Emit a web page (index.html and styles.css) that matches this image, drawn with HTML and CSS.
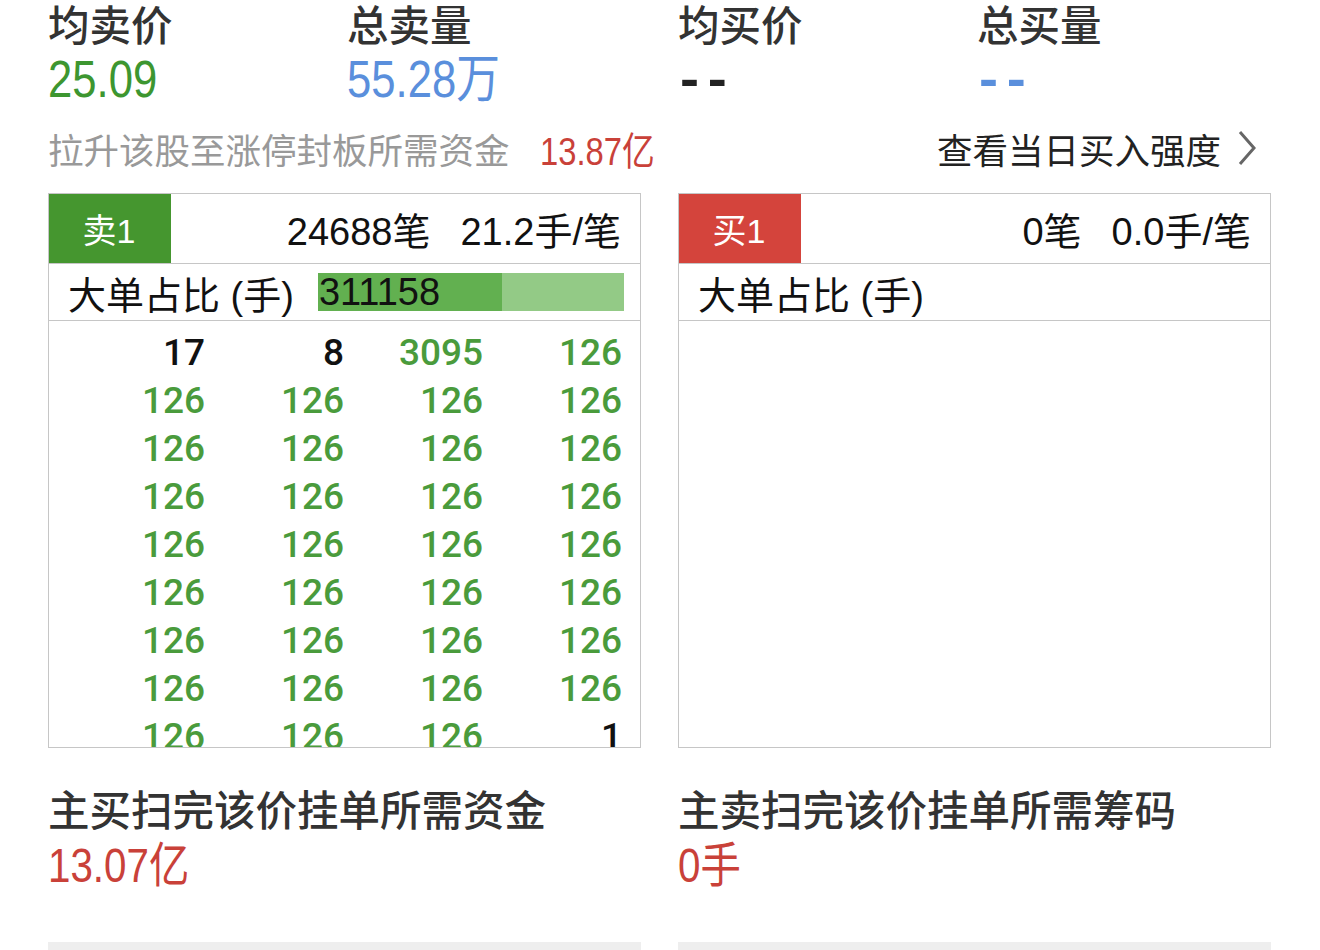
FILE: index.html
```html
<!DOCTYPE html>
<html lang="zh-CN">
<head>
<meta charset="utf-8">
<title>封单详情</title>
<link rel="stylesheet" href="styles.css">
</head>
<body>
<div class="page">
  <div class="side">
    <div class="stats">
      <div class="stat">
        <div class="stat-label">均卖价</div>
        <div class="stat-value green"><span class="cond">25.09</span></div>
      </div>
      <div class="stat">
        <div class="stat-label">总卖量</div>
        <div class="stat-value blue"><span class="cond">55.28万</span></div>
      </div>
    </div>
    <div class="note">
      <span class="note-label">拉升该股至涨停封板所需资金</span>
      <span class="note-value red"><span class="cond">13.87亿</span></span>
    </div>
    <div class="panel">
      <div class="panel-head">
        <div class="tag tag-sell">卖1</div>
        <div class="head-info"><span>24688笔</span><span>21.2手/笔</span></div>
      </div>
      <div class="panel-ratio">
        <span class="ratio-label">大单占比 (手)</span>
        <div class="ratio-bar">
          <div class="ratio-fill" style="width:60%"></div>
          <span class="ratio-text">311158</span>
        </div>
      </div>
      <div class="orders">
        <span class="dark">17</span><span class="dark">8</span><span>3095</span><span>126</span>
        <span>126</span><span>126</span><span>126</span><span>126</span>
        <span>126</span><span>126</span><span>126</span><span>126</span>
        <span>126</span><span>126</span><span>126</span><span>126</span>
        <span>126</span><span>126</span><span>126</span><span>126</span>
        <span>126</span><span>126</span><span>126</span><span>126</span>
        <span>126</span><span>126</span><span>126</span><span>126</span>
        <span>126</span><span>126</span><span>126</span><span>126</span>
        <span>126</span><span>126</span><span>126</span><span class="dark">1</span>
      </div>
    </div>
    <div class="sweep">
      <div class="sweep-label">主买扫完该价挂单所需资金</div>
      <div class="sweep-value red"><span class="cond">13.07亿</span></div>
    </div>
    <div class="grey-block"></div>
  </div>

  <div class="side">
    <div class="stats">
      <div class="stat">
        <div class="stat-label">均买价</div>
        <div class="stat-value dash"><span class="wide">--</span></div>
      </div>
      <div class="stat">
        <div class="stat-label">总买量</div>
        <div class="stat-value dash blue"><span class="wide">--</span></div>
      </div>
    </div>
    <div class="note note-right">
      <span class="note-link">查看当日买入强度</span>
      <svg class="chevron" width="20" height="36" viewBox="0 0 20 36"><path d="M3 2 L17 18 L3 34" fill="none" stroke="#666" stroke-width="3"/></svg>
    </div>
    <div class="panel">
      <div class="panel-head">
        <div class="tag tag-buy">买1</div>
        <div class="head-info"><span>0笔</span><span>0.0手/笔</span></div>
      </div>
      <div class="panel-ratio">
        <span class="ratio-label">大单占比 (手)</span>
      </div>
      <div class="orders"></div>
    </div>
    <div class="sweep">
      <div class="sweep-label">主卖扫完该价挂单所需筹码</div>
      <div class="sweep-value red"><span class="cond">0手</span></div>
    </div>
    <div class="grey-block"></div>
  </div>
</div>
</body>
</html>
```

FILE: styles.css
```css
* { box-sizing: border-box; }
html, body {
  margin: 0;
  padding: 0;
  background: #fff;
  overflow: hidden;
}
body {
  font-family: "Liberation Sans", "Noto Sans CJK SC", sans-serif;
  color: #111;
}
.page {
  display: grid;
  grid-template-columns: 593px 593px;
  column-gap: 37px;
  padding: 0 48px;
  height: 950px;
  overflow: hidden;
}
.side {
  display: flex;
  flex-direction: column;
  min-width: 0;
}
.stats {
  display: grid;
  grid-template-columns: 299px 1fr;
}
.stat-label {
  font-family: "Noto Sans CJK SC", sans-serif;
  font-size: 41.5px;
  font-weight: 500;
  line-height: 46px;
  color: #333;
  white-space: nowrap;
}
.cond {
  display: inline-block;
  transform: scaleX(0.84);
  transform-origin: left center;
  white-space: nowrap;
}
.wide {
  display: inline-block;
  transform: scaleX(1.1);
  transform-origin: left center;
  white-space: nowrap;
}
.stat-value {
  font-family: "Liberation Sans", "Noto Sans CJK SC", sans-serif;
  font-size: 52px;
  line-height: 66px;
  height: 66px;
  white-space: nowrap;
}
.stat-value.dash {
  font-weight: bold;
  letter-spacing: 8px;
  color: #222;
  padding-left: 2px;
  line-height: 64px;
}
.stat-value.dash.blue { color: #5a8fdc; }
.green { color: #3d9630; }
.blue { color: #5a8fdc; }
.red { color: #c94139; }

.note {
  display: flex;
  align-items: center;
  gap: 30px;
  height: 72px;
  margin-bottom: 9px;
  white-space: nowrap;
}
.note-label {
  font-family: "Noto Sans CJK SC", sans-serif;
  font-size: 35.5px;
  color: #999;
  flex: none;
}
.note-value {
  font-size: 39px;
  flex: none;
}
.note-right {
  justify-content: flex-end;
  gap: 16px;
  padding-right: 14px;
}
.note-link {
  font-family: "Noto Sans CJK SC", sans-serif;
  font-size: 35.5px;
  color: #222;
}
.chevron { display: block; flex: none; }

.panel {
  border: 1px solid #c6c6c6;
  height: 555px;
  display: flex;
  flex-direction: column;
}
.panel-head {
  display: flex;
  align-items: stretch;
  height: 70px;
  border-bottom: 1px solid #c6c6c6;
}
.tag {
  width: 122px;
  display: flex;
  align-items: center;
  justify-content: center;
  color: #fff;
  font-size: 34px;
  padding-right: 2px;
}
.tag-sell { background: #45962f; }
.tag-buy { background: #d4443c; }
.head-info {
  flex: 1;
  display: flex;
  justify-content: flex-end;
  align-items: center;
  gap: 30px;
  padding-right: 19px;
  font-size: 38px;
  color: #111;
  white-space: nowrap;
}
.panel-ratio {
  display: flex;
  align-items: center;
  height: 57px;
  border-bottom: 1px solid #c6c6c6;
  padding: 0 16px 0 19px;
  gap: 24px;
}
.ratio-label {
  font-size: 38px;
  color: #111;
  white-space: nowrap;
}
.ratio-bar {
  position: relative;
  flex: 1;
  height: 38px;
  background: #93ca86;
  display: flex;
  align-items: center;
}
.ratio-fill {
  position: absolute;
  left: 0;
  top: 0;
  bottom: 0;
  background: #62b050;
}
.ratio-text {
  position: relative;
  font-size: 38px;
  color: #111;
  padding-left: 1px;
}
.orders {
  flex: 1;
  overflow: hidden;
  display: grid;
  grid-template-columns: repeat(4, 139px);
  grid-auto-rows: 48px;
  align-content: start;
  padding: 8px 18px 0 17px;
  font-family: "Roboto", "Liberation Sans", sans-serif;
  font-weight: 500;
  font-size: 37px;
  line-height: 48px;
  color: #4a9b3c;
}
.orders span { text-align: right; }
.orders .dark { color: #111; }

.sweep {
  padding-top: 32px;
}
.sweep-label {
  font-family: "Noto Sans CJK SC", sans-serif;
  font-size: 41.5px;
  font-weight: 500;
  line-height: 56px;
  color: #333;
  white-space: nowrap;
}
.sweep-value {
  font-size: 48px;
  line-height: 60px;
  white-space: nowrap;
}
.grey-block {
  margin-top: 46px;
  height: 30px;
  background: #eeeeee;
}
```
